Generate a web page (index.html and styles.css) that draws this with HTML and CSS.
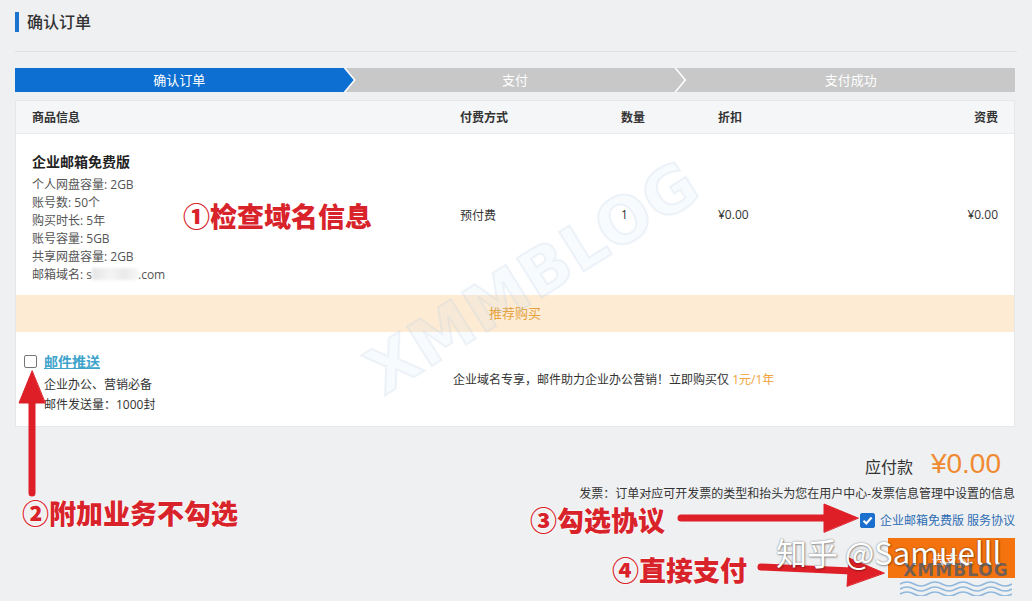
FILE: index.html
```html
<!DOCTYPE html>
<html>
  <head>
    <meta charset="utf-8">
    <meta name="viewport" content="width=device-width, initial-scale=1">
    <link rel="stylesheet" href="styles.css">
  </head>
  <body>
    <div class="page">
      <h2 class="title">确认订单</h2>
      <div class="divider"></div>

      <div class="steps">
        <div class="step first">确认订单</div>
        <div class="step mid">支付</div>
        <div class="step last">支付成功</div>
      </div>

      <div class="card">
        <div class="row head">
          <div>商品信息</div>
          <div>付费方式</div>
          <div>数量</div>
          <div>折扣</div>
          <div class="right">资费</div>
        </div>
        <div class="row item">
          <div class="info">
            <div class="name">企业邮箱免费版</div>
            <div>个人网盘容量: 2GB</div>
            <div>账号数: 50个</div>
            <div>购买时长: 5年</div>
            <div>账号容量: 5GB</div>
            <div>共享网盘容量: 2GB</div>
            <div>邮箱域名: s<span class="blur"></span>.com</div>
          </div>
          <div>预付费</div>
          <div>1</div>
          <div>¥0.00</div>
          <div class="right">¥0.00</div>
        </div>
        <div class="recommend">推荐购买</div>
        <div class="addon">
          <div class="addon-info">
            <div class="addon-name"><span class="box"></span><a href="#">邮件推送</a></div>
            <div class="addon-sub first-sub">企业办公、营销必备</div>
            <div class="addon-sub">邮件发送量：1000封</div>
          </div>
          <div class="addon-desc">企业域名专享，邮件助力企业办公营销！立即购买仅 <span class="orange">1元/1年</span></div>
        </div>
      </div>

      <div class="summary">
        <div class="total"><span class="total-label">应付款</span><span class="amount">¥0.00</span></div>
        <div class="invoice">发票：订单对应可开发票的类型和抬头为您在用户中心-发票信息管理中设置的信息</div>
        <div class="agree">
          <span class="box checked">
            <svg width="13" height="13" viewBox="0 0 13 13"><path d="M2.5 6.8 L5.3 9.4 L10.6 3.6" fill="none" stroke="#fff" stroke-width="2.2"/></svg>
          </span>
          <a href="#">企业邮箱免费版 服务协议</a>
        </div>
        <button class="pay">去支付</button>
      </div>
    </div>

    <!-- watermarks and red notes drawn over the page -->
    <div class="wm-big">XMMBLOG</div>

    <svg class="arrows" width="1032" height="601" viewBox="0 0 1032 601">
      <g fill="#df1f28" stroke="#df1f28" stroke-linecap="round">
        <line x1="32" y1="493" x2="32" y2="398" stroke-width="7"/>
        <polygon points="32,371 19,403 45,403" stroke-width="1"/>
        <line x1="681" y1="518" x2="830" y2="518" stroke-width="7"/>
        <polygon points="858,518 824,504 824,532" stroke-width="1"/>
        <line x1="761" y1="567" x2="852" y2="571" stroke-width="7"/>
        <polygon points="884,573 849,558 847,586" stroke-width="1"/>
      </g>
    </svg>

    <div class="note n1">①检查域名信息</div>
    <div class="note n2">②附加业务不勾选</div>
    <div class="note n3">③勾选协议</div>
    <div class="note n4">④直接支付</div>

    <div class="wm-zhihu">知乎 @Samuelll</div>
    <div class="wm-logo">
      <span>XMMBLOG</span>
      <svg width="112" height="16" viewBox="0 0 112 16">
        <g fill="none" stroke="#8fb8dc" stroke-width="1.6">
          <path d="M0 4 q7 -4 14 0 t14 0 t14 0 t14 0 t14 0 t14 0 t14 0 t14 0"/>
          <path d="M0 9 q7 -4 14 0 t14 0 t14 0 t14 0 t14 0 t14 0 t14 0 t14 0"/>
          <path d="M0 14 q7 -4 14 0 t14 0 t14 0 t14 0 t14 0 t14 0 t14 0 t14 0"/>
        </g>
      </svg>
    </div>
  </body>
</html>
```

FILE: styles.css
```css
body { margin: 0; background: #eff0f2; font-family: "Open Sans", "Noto Sans CJK SC", sans-serif; font-size: 12px; color: #333 }
a { text-decoration: none }
.page { padding: 12px 17px 0 15px }

.title { margin: 0; font-size: 16px; font-weight: 500; line-height: 20px; border-left: 4px solid #1a74cf; padding-left: 8px; color: #333 }
.divider { height: 1px; background: #e1e2e4; margin-top: 19px; margin-right: -2px }

.steps { display: flex; height: 24px; margin-top: 16px; background: #fff }
.step { flex: 0 0 calc((100% + 16px) / 3); box-sizing: border-box; line-height: 24px; text-align: center; color: #fff; font-size: 13px; background: #c8c8c8 }
.step + .step { margin-left: -8px }
.first { background: #0c6fd1; padding-right: 10px; clip-path: polygon(0 0, calc(100% - 10px) 0, 100% 50%, calc(100% - 10px) 100%, 0 100%) }
.mid { padding: 0 10px; clip-path: polygon(0 0, calc(100% - 10px) 0, 100% 50%, calc(100% - 10px) 100%, 0 100%, 10px 50%) }
.last { padding-left: 10px; clip-path: polygon(0 0, 100% 0, 100% 100%, 0 100%, 10px 50%) }

.card { margin-top: 8px; background: #fff; border: 1px solid #e6e7e9 }
.row { display: grid; grid-template-columns: 428px 161px 97px 1fr 120px; padding: 0 16px }
.head { height: 32px; align-items: center; background: #f5f6f8; border-bottom: 1px solid #ebecee; font-weight: bold; color: #333 }
.item { align-items: center; color: #333 }
.info { padding: 18px 0 11px; color: #555; line-height: 18px }
.name { font-size: 14px; font-weight: bold; color: #222; line-height: 20px; margin-bottom: 4px }
.blur { display: inline-block; width: 46px; height: 12px; vertical-align: -1px; background: linear-gradient(90deg, #e4e4e4, #f4f4f4 40%, #e9e9e9 70%, #f6f6f6); filter: blur(1.5px) }
.right { text-align: right }

.recommend { height: 37px; line-height: 37px; background: #fdebd4; text-align: center; color: #e6a23c; font-size: 13px }
.addon { display: grid; grid-template-columns: 429px 1fr; padding-left: 8px }
.addon-info { padding: 20px 0 11px }
.addon-name { display: flex; align-items: center; height: 18px; gap: 7px }
.addon-name a { color: #3fa4cc; font-size: 14px; font-weight: bold; text-decoration: underline }
.addon-sub { padding-left: 20px; line-height: 20px; color: #333 }
.first-sub { margin-top: 5px }
.addon-desc { align-self: center; color: #333 }
.orange { color: #f0a23a }

.box { width: 13px; height: 13px; box-sizing: border-box; border: 1px solid #767676; border-radius: 2px; background: #fff }

.summary { display: flex; flex-direction: column; align-items: flex-end }
.total { display: flex; align-items: baseline; margin-top: 21px; margin-right: 14px; height: 32px; line-height: 32px }
.total-label { font-size: 16px; color: #333 }
.amount { font-size: 28px; font-weight: 300; color: #f08a30; margin-left: 18px; font-family: "Liberation Sans", sans-serif }
.invoice { line-height: 18px; margin-top: 5px; color: #333 }
.agree { display: flex; align-items: center; gap: 5px; height: 20px; margin-top: 7px }
.agree a { color: #2e6db4 }
.checked { width: 15px; height: 15px; background: #1a6fcf; border-color: #1a6fcf; display: flex; align-items: center; justify-content: center }
.pay { width: 127px; height: 40px; margin-top: 8px; border: 0; background: #f5730e; color: #fff; font-size: 13px; font-family: inherit }

.arrows { position: absolute; left: 0; top: 0; pointer-events: none }
.note { position: absolute; font-family: "Noto Sans CJK SC", sans-serif; font-size: 27px; font-weight: 900; line-height: 27px; color: #d9232b; text-shadow: 0 0 2px #fff, 0 0 2px #fff; white-space: nowrap }
.n1 { left: 183px; top: 202px }
.n2 { left: 22px; top: 499px }
.n3 { left: 530px; top: 506px }
.n4 { left: 612px; top: 556px }

.wm-big { position: absolute; left: 345px; top: 245px; width: 360px; text-align: center; font-family: "DejaVu Sans", sans-serif; font-size: 64px; font-weight: bold; letter-spacing: 1px; color: rgba(200, 220, 238, 0.12); -webkit-text-stroke: 2px rgba(180, 205, 228, 0.22); transform: rotate(-32deg); pointer-events: none }
.wm-zhihu { position: absolute; left: 776px; top: 532px; font-family: "Noto Sans CJK SC", sans-serif; font-size: 31px; line-height: 40px; color: #fff; text-shadow: 0 0 2px rgba(0, 0, 0, 0.45), 1px 1px 2px rgba(0, 0, 0, 0.3); white-space: nowrap }
.wm-logo { position: absolute; left: 900px; top: 560px; display: flex; flex-direction: column; align-items: center }
.wm-logo span { font-family: "DejaVu Sans", sans-serif; font-size: 17px; font-weight: bold; line-height: 20px; letter-spacing: 1px; color: rgba(55, 85, 115, 0.7) }
```
